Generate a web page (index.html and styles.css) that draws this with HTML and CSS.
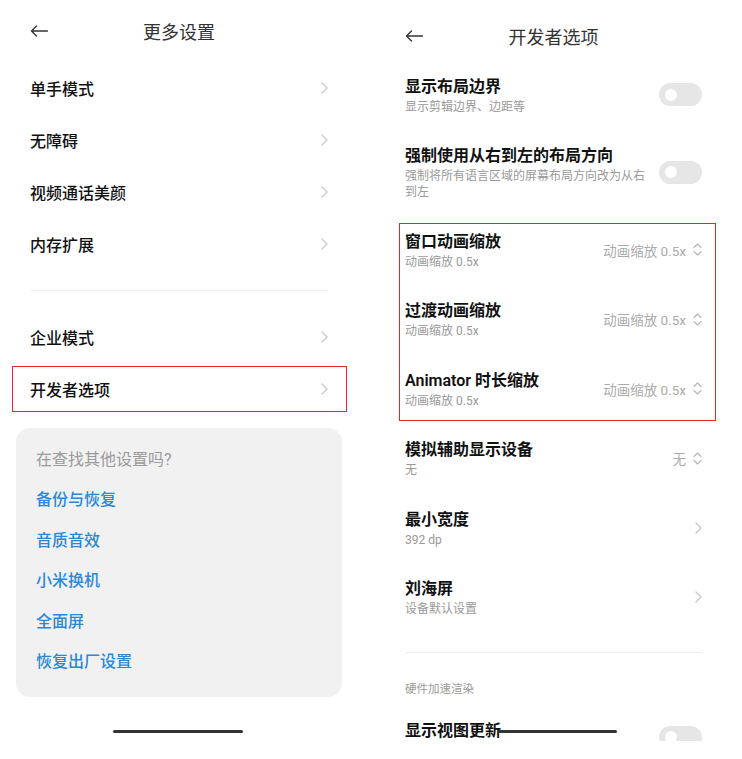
FILE: index.html
```html
<!DOCTYPE html>
<html lang="zh-CN">

<head>
    <meta charset="UTF-8">
    <meta name="viewport" content="width=device-width, initial-scale=1.0">
    <title>更多设置 / 开发者选项</title>
    <link rel="stylesheet" href="styles.css">
</head>

<body>
    <div class="screen">
        <!-- left: more settings -->
        <section class="panel panel-left">
            <header class="topbar">
                <svg class="back" width="18" height="12" viewBox="0 0 18 12"><path d="M17.5 6H1.5M6.5 1L1.5 6l5 5" /></svg>
                <h1>更多设置</h1>
                <span class="spacer"></span>
            </header>

            <ul class="menu">
                <li class="menu-item"><span>单手模式</span><svg class="chev" width="7" height="12" viewBox="0 0 7 12"><path d="M1 1l5 5-5 5" /></svg></li>
                <li class="menu-item"><span>无障碍</span><svg class="chev" width="7" height="12" viewBox="0 0 7 12"><path d="M1 1l5 5-5 5" /></svg></li>
                <li class="menu-item"><span>视频通话美颜</span><svg class="chev" width="7" height="12" viewBox="0 0 7 12"><path d="M1 1l5 5-5 5" /></svg></li>
                <li class="menu-item"><span>内存扩展</span><svg class="chev" width="7" height="12" viewBox="0 0 7 12"><path d="M1 1l5 5-5 5" /></svg></li>
            </ul>

            <hr class="divider">

            <ul class="menu">
                <li class="menu-item"><span>企业模式</span><svg class="chev" width="7" height="12" viewBox="0 0 7 12"><path d="M1 1l5 5-5 5" /></svg></li>
                <li class="menu-item marked"><span>开发者选项</span><svg class="chev" width="7" height="12" viewBox="0 0 7 12"><path d="M1 1l5 5-5 5" /></svg></li>
            </ul>

            <div class="suggest">
                <p class="suggest-head">在查找其他设置吗?</p>
                <a class="suggest-link">备份与恢复</a>
                <a class="suggest-link">音质音效</a>
                <a class="suggest-link">小米换机</a>
                <a class="suggest-link">全面屏</a>
                <a class="suggest-link">恢复出厂设置</a>
            </div>

            <div class="home-bar"></div>
        </section>

        <!-- right: developer options -->
        <section class="panel panel-right">
            <header class="topbar">
                <svg class="back" width="18" height="12" viewBox="0 0 18 12"><path d="M17.5 6H1.5M6.5 1L1.5 6l5 5" /></svg>
                <h1>开发者选项</h1>
                <span class="spacer"></span>
            </header>

            <div class="opt">
                <div class="opt-text">
                    <div class="opt-title">显示布局边界</div>
                    <div class="opt-sub">显示剪辑边界、边距等</div>
                </div>
                <span class="toggle"></span>
            </div>

            <div class="opt">
                <div class="opt-text">
                    <div class="opt-title">强制使用从右到左的布局方向</div>
                    <div class="opt-sub">强制将所有语言区域的屏幕布局方向改为从右到左</div>
                </div>
                <span class="toggle"></span>
            </div>

            <div class="opt-group marked">
                <div class="opt">
                    <div class="opt-text">
                        <div class="opt-title">窗口动画缩放</div>
                        <div class="opt-sub">动画缩放 0.5x</div>
                    </div>
                    <span class="opt-value">动画缩放 0.5x<svg class="updown" width="9" height="13" viewBox="0 0 9 13"><path d="M1 4.5L4.5 1 8 4.5M1 8.5L4.5 12 8 8.5" /></svg></span>
                </div>
                <div class="opt">
                    <div class="opt-text">
                        <div class="opt-title">过渡动画缩放</div>
                        <div class="opt-sub">动画缩放 0.5x</div>
                    </div>
                    <span class="opt-value">动画缩放 0.5x<svg class="updown" width="9" height="13" viewBox="0 0 9 13"><path d="M1 4.5L4.5 1 8 4.5M1 8.5L4.5 12 8 8.5" /></svg></span>
                </div>
                <div class="opt">
                    <div class="opt-text">
                        <div class="opt-title">Animator 时长缩放</div>
                        <div class="opt-sub">动画缩放 0.5x</div>
                    </div>
                    <span class="opt-value">动画缩放 0.5x<svg class="updown" width="9" height="13" viewBox="0 0 9 13"><path d="M1 4.5L4.5 1 8 4.5M1 8.5L4.5 12 8 8.5" /></svg></span>
                </div>
            </div>

            <div class="opt">
                <div class="opt-text">
                    <div class="opt-title">模拟辅助显示设备</div>
                    <div class="opt-sub">无</div>
                </div>
                <span class="opt-value">无<svg class="updown" width="9" height="13" viewBox="0 0 9 13"><path d="M1 4.5L4.5 1 8 4.5M1 8.5L4.5 12 8 8.5" /></svg></span>
            </div>

            <div class="opt">
                <div class="opt-text">
                    <div class="opt-title">最小宽度</div>
                    <div class="opt-sub">392 dp</div>
                </div>
                <svg class="chev" width="7" height="12" viewBox="0 0 7 12"><path d="M1 1l5 5-5 5" /></svg>
            </div>

            <div class="opt">
                <div class="opt-text">
                    <div class="opt-title">刘海屏</div>
                    <div class="opt-sub">设备默认设置</div>
                </div>
                <svg class="chev" width="7" height="12" viewBox="0 0 7 12"><path d="M1 1l5 5-5 5" /></svg>
            </div>

            <hr class="divider">

            <p class="section-label">硬件加速渲染</p>

            <div class="opt opt-last">
                <div class="opt-text">
                    <div class="opt-title">显示视图更新</div>
                </div>
                <span class="toggle"></span>
            </div>

            <div class="home-bar"></div>
        </section>
    </div>
</body>

</html>
```

FILE: styles.css
```css
* {
    margin: 0;
    padding: 0;
    box-sizing: border-box;
    font-family: Roboto, "Noto Sans CJK SC", sans-serif;
}

html,
body {
    width: 742px;
    height: 759px;
    background-color: #fff;
    overflow: hidden;
}

.screen {
    display: flex;
    height: 759px;
}

.panel {
    position: relative;
    width: 371px;
    height: 741px;
    overflow: hidden;
}

.panel-left {
    padding: 0 43px 0 30px;
}

.panel-right {
    padding: 0 40px 0 34px;
}

/* header */
.topbar {
    display: flex;
    align-items: center;
    height: 62px;
}

.panel-right .topbar {
    height: 60px;
    padding-top: 12px;
}

.topbar h1 {
    flex: 1;
    text-align: center;
    font-size: 18px;
    font-weight: 400;
    color: #333;
}

.back,
.spacer {
    width: 18px;
    flex-shrink: 0;
}

.back path {
    fill: none;
    stroke: #333;
    stroke-width: 1.4;
    stroke-linecap: round;
    stroke-linejoin: round;
}

.chev {
    flex-shrink: 0;
}

.chev path {
    fill: none;
    stroke: #c6c6c6;
    stroke-width: 1.2;
    stroke-linecap: round;
    stroke-linejoin: round;
}

/* left list */
.menu {
    list-style: none;
}

.menu-item {
    display: flex;
    align-items: center;
    justify-content: space-between;
    height: 52px;
    font-size: 16px;
    font-weight: 500;
    color: #111;
}

.marked {
    position: relative;
}

.marked::after {
    content: "";
    position: absolute;
    border: 1px solid #e0282e;
    pointer-events: none;
}

.menu-item.marked::after {
    top: 3px;
    bottom: 3px;
    left: -18px;
    right: -19px;
}

.divider {
    border: none;
    border-top: 1px solid #f0f0f0;
    margin: 20px 0;
}

.suggest {
    display: flex;
    flex-direction: column;
    margin: 13px -14px 0;
    padding: 12px 20px 14px;
    border-radius: 14px;
    background-color: #f1f1f1;
}

.suggest-head {
    line-height: 40px;
    font-size: 16px;
    color: #9a9a9a;
}

.suggest-link {
    line-height: 40.5px;
    font-size: 16px;
    font-weight: 500;
    color: #2a88d8;
}

.home-bar {
    position: absolute;
    top: 730px;
    height: 3px;
    border-radius: 2px;
    background-color: #333;
}

.panel-left .home-bar {
    left: 113px;
    width: 130px;
}

.panel-right .home-bar {
    left: 127px;
    width: 119px;
}

/* right options */
.opt {
    display: flex;
    align-items: center;
    justify-content: space-between;
    gap: 10px;
    padding: 14.75px 0;
}

.opt-last {
    align-items: flex-start;
}

.opt-last .toggle {
    margin-top: 7px;
}

.opt-text {
    flex: 1;
    min-width: 0;
}

.opt-title {
    font-size: 16px;
    line-height: 24px;
    font-weight: 600;
    color: #111;
}

.opt-sub {
    font-size: 12px;
    line-height: 16px;
    color: #999;
}

.toggle {
    position: relative;
    flex-shrink: 0;
    width: 43px;
    height: 23px;
    border-radius: 12px;
    background-color: #e6e6e6;
}

.toggle::before {
    content: "";
    position: absolute;
    top: 5.5px;
    left: 6px;
    width: 12px;
    height: 12px;
    border-radius: 50%;
    background-color: #fff;
}

.opt-value {
    display: flex;
    align-items: center;
    gap: 7px;
    font-size: 13.5px;
    color: #ababab;
    white-space: nowrap;
}

.updown path {
    fill: none;
    stroke: #b5b5b5;
    stroke-width: 1.1;
    stroke-linecap: round;
    stroke-linejoin: round;
}

.opt-group.marked::after {
    top: 8px;
    bottom: 3px;
    left: -6px;
    right: -14px;
}

.panel-right .divider {
    border-top-color: #eeeeee;
}

.section-label {
    margin: 25px 0 4px;
    line-height: 22px;
    font-size: 11.5px;
    color: #9a9a9a;
}
```
